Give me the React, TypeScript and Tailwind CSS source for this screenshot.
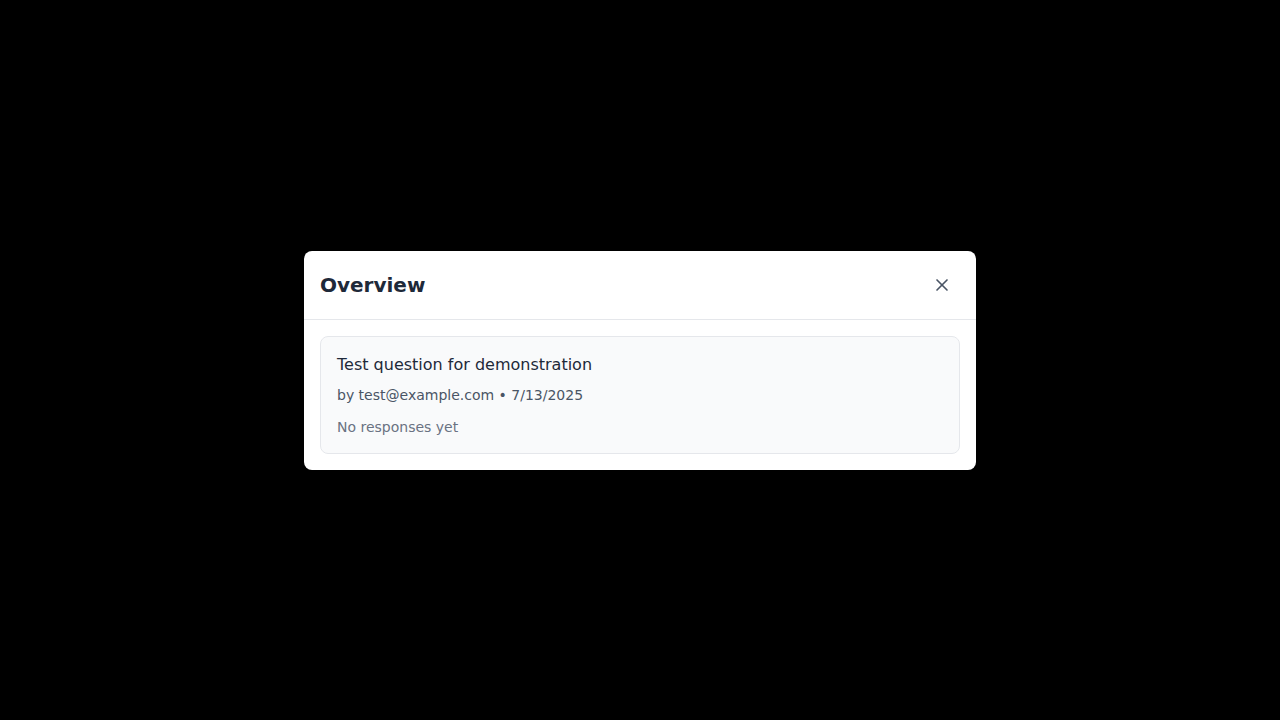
import React from 'react';
import { X } from 'lucide-react';

const App: React.FC = () => {
  return (
    <div className="min-h-screen w-full bg-black flex items-center justify-center px-4 font-['DejaVu_Sans',sans-serif]">
      <div className="w-full max-w-2xl bg-white rounded-lg overflow-hidden">
        {/* Header */}
        <div className="flex items-center justify-between px-4 py-5 border-b border-gray-200">
          <h2 className="text-xl leading-7 font-bold text-gray-800">Overview</h2>
          <button className="p-2 -my-2 text-gray-600 rounded-md">
            <X size={20} strokeWidth={2} className="w-5 h-5" />
          </button>
        </div>

        {/* Body */}
        <div className="p-4">
          <div className="bg-gray-50 border border-gray-200 rounded-lg p-4">
            <h3 className="text-base text-gray-800">Test question for demonstration</h3>
            <p className="mt-2 text-sm text-gray-600">by test@example.com • 7/13/2025</p>
            <p className="mt-3 text-sm text-gray-500">No responses yet</p>
          </div>
        </div>
      </div>
    </div>
  );
};

export default App;
